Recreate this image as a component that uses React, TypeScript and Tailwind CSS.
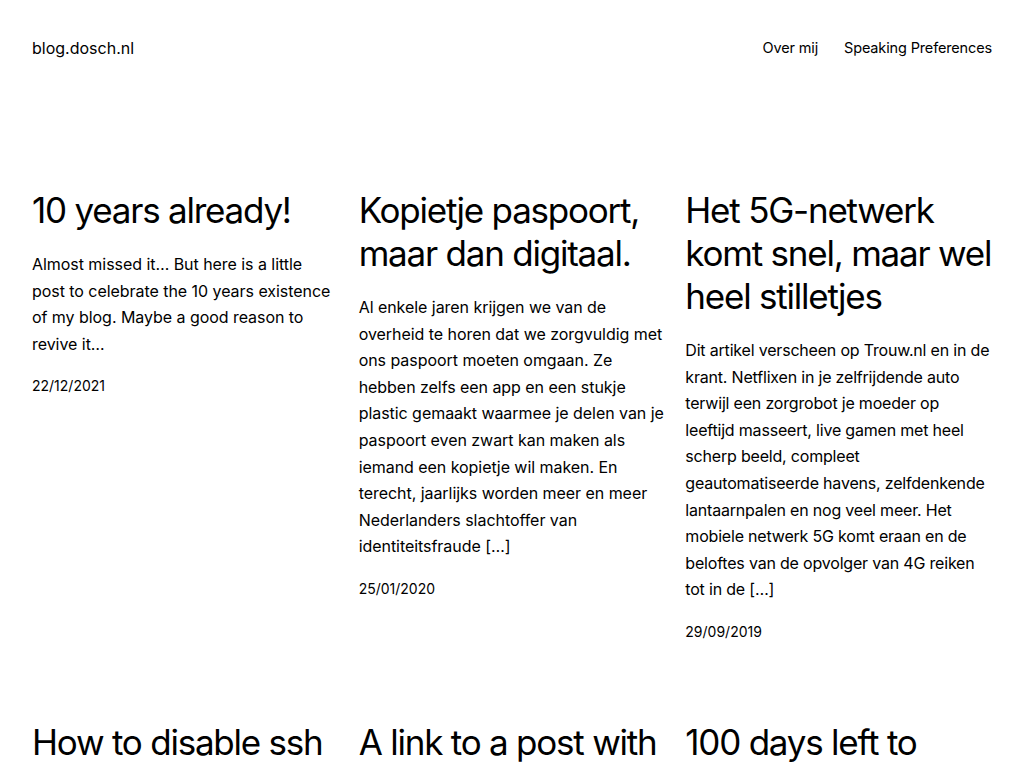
const posts = [
  {
    title: "10 years already!",
    excerpt:
      "Almost missed it… But here is a little post to celebrate the 10 years existence of my blog. Maybe a good reason to revive it…",
    date: "22/12/2021",
  },
  {
    title: "Kopietje paspoort, maar dan digitaal.",
    excerpt:
      "Al enkele jaren krijgen we van de overheid te horen dat we zorgvuldig met ons paspoort moeten omgaan. Ze hebben zelfs een app en een stukje plastic gemaakt waarmee je delen van je paspoort even zwart kan maken als iemand een kopietje wil maken. En terecht, jaarlijks worden meer en meer Nederlanders slachtoffer van identiteitsfraude […]",
    date: "25/01/2020",
  },
  {
    title: "Het 5G-netwerk komt snel, maar wel heel stilletjes",
    excerpt:
      "Dit artikel verscheen op Trouw.nl en in de krant. Netflixen in je zelfrijdende auto terwijl een zorgrobot je moeder op leeftijd masseert, live gamen met heel scherp beeld, compleet geautomatiseerde havens, zelfdenkende lantaarnpalen en nog veel meer. Het mobiele netwerk 5G komt eraan en de beloftes van de opvolger van 4G reiken tot in de […]",
    date: "29/09/2019",
    tight: true,
  },
  { title: "How to disable ssh", excerpt: "", date: "" },
  { title: "A link to a post with", excerpt: "", date: "" },
  { title: "100 days left to", excerpt: "", date: "" },
];

export default function App() {
  return (
    <div className="min-h-screen bg-white text-black font-['Inter','Liberation_Sans',sans-serif]">
      <header className="flex items-center justify-between px-8 pt-[37px]">
        <a href="#" className="text-[16px] leading-[22px]">
          blog.dosch.nl
        </a>
        <nav className="flex gap-[26px] text-[14.5px] leading-[22px] tracking-[-0.01em]">
          <a href="#">Over mij</a>
          <a href="#">Speaking Preferences</a>
        </nav>
      </header>

      <main className="grid grid-cols-3 gap-x-5 gap-y-[77px] px-8 pt-[130px]">
        {posts.map((p) => (
          <article key={p.title} className="flex flex-col">
            <h2 className="text-[35px] leading-[43px] tracking-[-0.035em]">{p.title}</h2>
            {p.excerpt && (
              <p
                className={`mt-[19px] text-[16px] leading-[26.6px] ${
                  p.tight ? "tracking-[-0.012em]" : "tracking-[-0.003em]"
                }`}
              >
                {p.excerpt}
              </p>
            )}
            {p.date && (
              <time className="mt-[17px] text-[14px] leading-[24px]">{p.date}</time>
            )}
          </article>
        ))}
      </main>
    </div>
  );
}
